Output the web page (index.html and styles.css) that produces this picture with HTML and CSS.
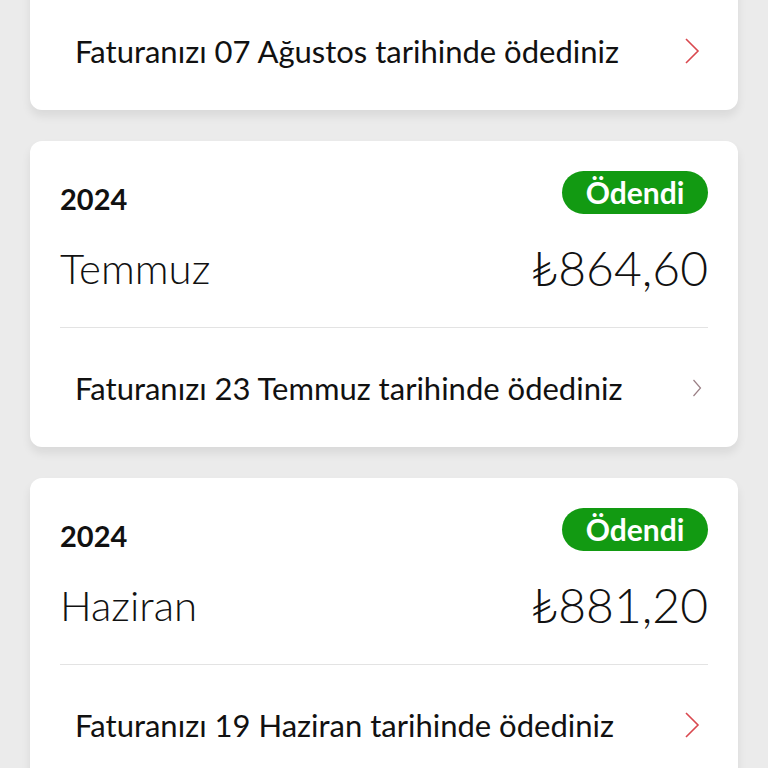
FILE: index.html
```html
<!DOCTYPE html>
<html lang="tr">
<head>
    <meta charset="UTF-8">
    <meta name="viewport" content="width=device-width, initial-scale=1.0">
    <title>Faturalarım</title>
    <link rel="stylesheet" href="styles.css">
</head>
<body>
    <div class="bill-list">
        <!-- August bill, scrolled mostly out of view -->
        <div class="bill-card">
            <div class="bill-head">
                <div class="bill-year">2024</div>
                <div class="badge-paid">Ödendi</div>
            </div>
            <div class="bill-main">
                <div class="bill-month">Ağustos</div>
                <div class="bill-amount">₺870,40</div>
            </div>
            <div class="bill-row">
                <span>Faturanızı 07 Ağustos tarihinde ödediniz</span>
                <svg class="chevron" width="16" height="26" viewBox="0 0 16 26"><path d="M2 1 L14 13 L2 25" fill="none" stroke="#d9484f" stroke-width="1.6"/></svg>
            </div>
        </div>

        <div class="bill-card">
            <div class="bill-head">
                <div class="bill-year">2024</div>
                <div class="badge-paid">Ödendi</div>
            </div>
            <div class="bill-main">
                <div class="bill-month">Temmuz</div>
                <div class="bill-amount">₺864,60</div>
            </div>
            <div class="bill-row">
                <span>Faturanızı 23 Temmuz tarihinde ödediniz</span>
                <svg class="chevron small" width="10" height="18" viewBox="0 0 10 18"><path d="M1.5 1 L8.5 9 L1.5 17" fill="none" stroke="#9a7f85" stroke-width="1.2"/></svg>
            </div>
        </div>

        <div class="bill-card">
            <div class="bill-head">
                <div class="bill-year">2024</div>
                <div class="badge-paid">Ödendi</div>
            </div>
            <div class="bill-main">
                <div class="bill-month">Haziran</div>
                <div class="bill-amount">₺881,20</div>
            </div>
            <div class="bill-row">
                <span>Faturanızı 19 Haziran tarihinde ödediniz</span>
                <svg class="chevron" width="16" height="26" viewBox="0 0 16 26"><path d="M2 1 L14 13 L2 25" fill="none" stroke="#d9484f" stroke-width="1.6"/></svg>
            </div>
        </div>
    </div>
</body>
</html>
```

FILE: styles.css
```css
body, html {
    margin: 0;
    padding: 0;
    background-color: #ebebeb;
    font-family: Lato, "Open Sans", sans-serif;
    color: #111;
    overflow: hidden;
}

.bill-list {
    display: flex;
    flex-direction: column;
    gap: 31px;
    padding: 0 30px;
    margin-top: -196px;
}

.bill-card {
    background-color: white;
    border-radius: 12px;
    box-shadow: 0 6px 10px rgba(0, 0, 0, 0.08);
    padding: 0 30px;
}

.bill-head {
    display: flex;
    justify-content: space-between;
    align-items: center;
    padding-top: 30px;
    height: 43px;
}

.bill-year {
    font-size: 29px;
    font-weight: bold;
    position: relative;
    top: 6px;
}

.badge-paid {
    background-color: #129a12;
    color: white;
    font-size: 30px;
    font-weight: bold;
    height: 43px;
    line-height: 43px;
    width: 146px;
    text-align: center;
    border-radius: 22px;
}

.bill-main {
    display: flex;
    justify-content: space-between;
    align-items: center;
    height: 107px;
    padding-bottom: 6px;
    border-bottom: 1px solid #e3e3e3;
}

.bill-month {
    font-size: 42px;
    font-weight: 300;
}

.bill-amount {
    font-size: 48px;
    font-weight: 300;
}

.bill-row {
    display: flex;
    justify-content: space-between;
    align-items: center;
    height: 119px;
    padding-left: 15px;
    font-size: 31px;
}

.chevron {
    margin-right: 8px;
}

.chevron.small {
    margin-right: 6px;
}
```
